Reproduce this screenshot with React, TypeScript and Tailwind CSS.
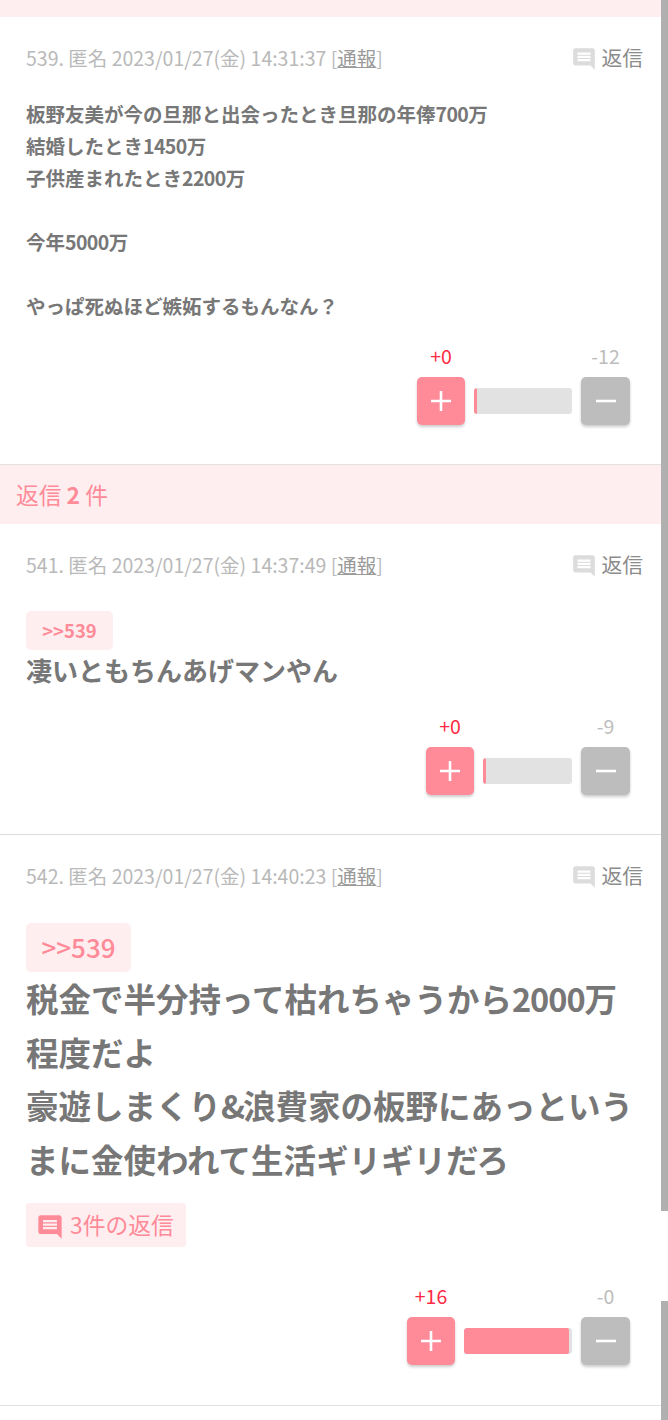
const fontStack = '"Noto Sans CJK JP", "Noto Sans", sans-serif';

function CommentIcon({ className }: { className: string }) {
  return (
    <svg viewBox="0 0 24 24" className={className} fill="currentColor">
      <path d="M21.99 4c0-1.1-.89-2-1.99-2H4c-1.1 0-2 .9-2 2v12c0 1.1.9 2 2 2h14l4 4-.01-18zM18 14H6v-2h12v2zm0-3H6V9h12v2zm0-3H6V6h12v2z" />
    </svg>
  );
}

function Num({ children }: { children: string }) {
  return <span className="tracking-[-0.6px]">{children}</span>;
}

function Vote({ up, down, upPct, barClass }: { up: number; down: number; upPct: number; barClass: string }) {
  return (
    <div className="flex justify-end pr-[38px] items-end">
      <div className="flex flex-col items-center">
        <span className="text-[19.5px] leading-[26px] text-[#ff2a45] mb-[8px]">+{up}</span>
        <button className="w-[48px] h-[48px] rounded-[5px] bg-[#ff8a98] shadow-[0_2px_3px_rgba(0,0,0,0.2)] flex items-center justify-center">
          <svg viewBox="0 0 20 20" className="w-[20px] h-[20px]" stroke="white" strokeWidth="2.6">
            <path d="M10 0v20M0 10h20" />
          </svg>
        </button>
      </div>
      <div className={`${barClass} h-[26px] mx-[9px] mb-[11px] rounded-[3px] bg-[#e2e2e2] overflow-hidden`}>
        <div className="h-full bg-[#ff8a98] rounded-[2px]" style={{ width: `${upPct}%` }} />
      </div>
      <div className="flex flex-col items-center">
        <span className="text-[19.5px] leading-[26px] text-[#bdbdbd] mb-[8px]">-{down}</span>
        <button className="w-[49px] h-[48px] rounded-[5px] bg-[#bdbdbd] shadow-[0_2px_3px_rgba(0,0,0,0.2)] flex items-center justify-center">
          <svg viewBox="0 0 20 20" className="w-[20px] h-[20px]" stroke="white" strokeWidth="2.6">
            <path d="M0 10h20" />
          </svg>
        </button>
      </div>
    </div>
  );
}

function Meta({ no, date }: { no: number; date: string }) {
  return (
    <div className="flex justify-between items-center pl-[26px] pr-[25px] h-[28px]">
      <div className="text-[19.5px] leading-[28px] text-[#b9b9b9]">
        {no}. 匿名 {date} [<span className="underline text-[#9a9a9a]">通報</span>]
      </div>
      <div className="flex items-center text-[20.8px] text-[#8c8c8c]">
        <CommentIcon className="w-[26px] h-[26px] text-[#dcdcdc] mr-[4px] mt-[2px]" />
        返信
      </div>
    </div>
  );
}

export default function App() {
  return (
    <div className="relative h-[1420px] overflow-hidden bg-white" style={{ fontFamily: fontStack }}>
      <div className="h-[17px] bg-[#ffeef0]" />

      {/* 539 */}
      <div className="h-[448px] pt-[27px] border-b border-[#e2e2e2]">
        <Meta no={539} date="2023/01/27(金) 14:31:37" />
        <div className="mt-[26px] pl-[26px] text-[19.5px] leading-[32px] font-bold text-[#777777]">
          <div className="h-[32px]">板野友美が今の旦那と出会ったとき旦那の年俸<Num>700</Num>万</div>
          <div className="h-[32px]">結婚したとき<Num>1450</Num>万</div>
          <div className="h-[32px]">子供産まれたとき<Num>2200</Num>万</div>
          <div className="h-[32px]" />
          <div className="h-[32px]">今年<Num>5000</Num>万</div>
          <div className="h-[32px]" />
          <div className="h-[32px]">やっぱ死ぬほど嫉妬するもんなん？</div>
        </div>
        <div className="mt-[21px]">
          <Vote up={0} down={12} upPct={3} barClass="w-[98px]" />
        </div>
      </div>

      <div className="h-[59px] pl-[16px] pt-[1px] flex items-center text-[22.75px] text-[#ff8a98] bg-[#ffeef0]">
        返信&nbsp;<span className="font-bold">2</span>&nbsp;件
      </div>

      {/* 541 */}
      <div className="h-[311px] pt-[27px] border-b border-[#dcdcdc]">
        <Meta no={541} date="2023/01/27(金) 14:37:49" />
        <div className="mt-[32px] pl-[26px]">
          <div className="w-[87px] h-[39px] rounded-[5px] bg-[#ffeef0] text-[#ff8a98] font-bold text-[18.5px] leading-[38px] text-center">
            &gt;&gt;539
          </div>
          <div className="-mt-[1px] text-[26px] leading-[42px] font-bold text-[#777777]">凄いともちんあげマンやん</div>
        </div>
        <div className="mt-[22px]">
          <Vote up={0} down={9} upPct={3} barClass="w-[89px]" />
        </div>
      </div>

      {/* 542 */}
      <div className="h-[571px] pt-[27px] border-b border-[#e2e2e2]">
        <Meta no={542} date="2023/01/27(金) 14:40:23" />
        <div className="mt-[33px] pl-[26px] pr-[30px]">
          <div className="w-[105px] h-[49px] rounded-[5px] bg-[#ffeef0] text-[#ff8a98] text-[26px] leading-[47px] text-center font-medium">
            &gt;&gt;539
          </div>
          <div className="-mt-[1px] text-[32.5px] leading-[53.6px] font-bold text-[#777777]">
            <div>税金で半分持って枯れちゃうから<span className="tracking-[-1px]">2000</span>万</div>
            <div>程度だよ</div>
            <div>豪遊しまくり<span className="tracking-[-2px]">&amp;</span>浪費家の板野にあっという</div>
            <div>まに金使われて生活ギリギリだろ</div>
          </div>
          <div className="mt-[18px] w-[160px] h-[44px] rounded-[3px] bg-[#ffeef0] text-[#ff8a98] text-[22.75px] flex items-center pl-[10px]">
            <CommentIcon className="w-[28px] h-[28px] mr-[6px] mt-[4px]" />
            3件の返信
          </div>
        </div>
        <div className="mt-[36px]">
          <Vote up={16} down={0} upPct={97} barClass="w-[108px]" />
        </div>
      </div>

      {/* scrollbar overlay */}
      <div className="absolute right-0 top-0 w-[7px] h-[1211px] bg-[#b0b0b0]" />
      <div className="absolute right-0 top-[1301px] w-[7px] h-[119px] bg-[#b0b0b0]" />
    </div>
  );
}
